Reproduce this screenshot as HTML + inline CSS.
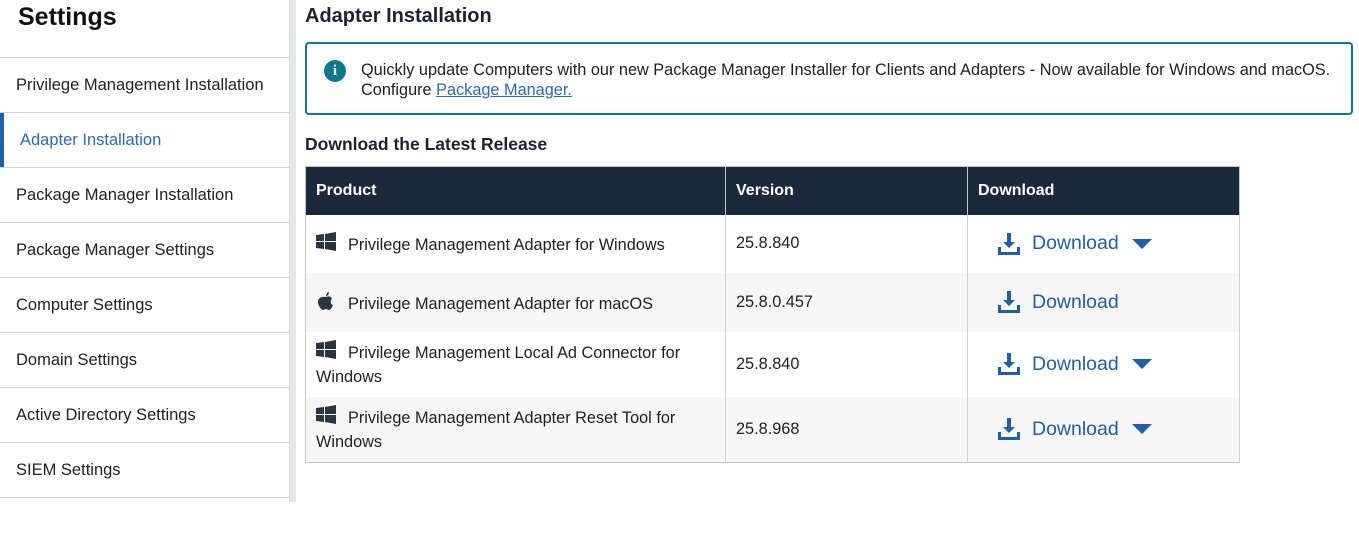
<!DOCTYPE html>
<html><head><meta charset="utf-8"><style>
*{box-sizing:border-box;margin:0;padding:0}
body{width:1359px;height:502px;overflow:hidden;background:#fff;font-family:"Liberation Sans",sans-serif;color:#1f1f1f;position:relative}
.side{position:absolute;left:0;top:0;width:289px;height:502px;background:#fff}
.sep{position:absolute;left:289px;top:0;width:7px;height:502px;background:#e6e7ea;border-left:1px solid #d4d6da}
.side h1{position:absolute;left:18px;top:3px;font-size:25px;font-weight:bold;color:#111}
.item{position:absolute;left:0;width:289px;height:55px;border-top:1px solid #d6d6d6;font-size:16.5px;padding-left:16px;line-height:55px;color:#222}
.item.act{color:#2a6bb0;padding-left:20px}
.item.act:before{content:"";position:absolute;left:0;top:0;width:4px;height:55px;background:#1e5fa6}
h2{position:absolute;left:305px;top:5px;font-size:20px;font-weight:bold;color:#1b2430}
.info{position:absolute;left:305px;top:42px;width:1048px;height:73px;border:2px solid #0a7a8f;border-radius:4px}
.info .ic{position:absolute;left:17px;top:16px;width:22px;height:22px;border-radius:50%;background:#0a7a8f;color:#fff;font-weight:bold;font-size:15px;text-align:center;line-height:22px;font-family:"Liberation Serif",serif}
.info p{position:absolute;left:54px;top:16px;font-size:16.3px;line-height:20px;color:#1f1f1f;white-space:nowrap}
.info a{color:#2a6bb0;text-decoration:underline}
h3{position:absolute;left:305px;top:134px;font-size:17.5px;font-weight:bold;color:#1b2430}
table{position:absolute;left:305px;top:166px;width:935px;border-collapse:collapse;border:1px solid #c4c4c4;font-size:16.3px}
th{background:#1b2a3b;color:#fff;text-align:left;height:48px;padding-left:10px;font-size:16px;border-right:1px solid #c4c4c4}
td{border-right:1px solid #d0d0d0;padding-left:10px;vertical-align:middle}
tr.a td{background:#fff}tr.b td{background:#f7f7f7}
.dl{color:#1e5fa6;font-size:19.5px;padding-left:20px;display:flex;align-items:center}
.dl svg{margin-right:12px}
.tri{width:0;height:0;border-left:10px solid transparent;border-right:10px solid transparent;border-top:10px solid #1e5fa6;margin-left:13px}
.ico{display:inline-block;vertical-align:-2px;margin-right:12px}
</style></head><body>
<div class="side">
<h1>Settings</h1>
<div class="item" style="top:57px">Privilege Management Installation</div>
<div class="item act" style="top:112px">Adapter Installation</div>
<div class="item" style="top:167px">Package Manager Installation</div>
<div class="item" style="top:222px">Package Manager Settings</div>
<div class="item" style="top:277px">Computer Settings</div>
<div class="item" style="top:332px">Domain Settings</div>
<div class="item" style="top:387px">Active Directory Settings</div>
<div class="item" style="top:442px">SIEM Settings</div>
<div class="item" style="top:497px"></div>
</div>
<div class="sep"></div>
<h2>Adapter Installation</h2>
<div class="info"><div class="ic">i</div><p>Quickly update Computers with our new Package Manager Installer for Clients and Adapters - Now available for Windows and macOS.<br>Configure <a>Package Manager.</a></p></div>
<h3>Download the Latest Release</h3>
<table>
<tr><th style="width:420px">Product</th><th style="width:242px">Version</th><th>Download</th></tr>
<tr class="a" style="height:58px"><td><svg class="ico" width="20" height="20" viewBox="0 0 20 20"><path fill="#2b3440" d="M0 3l8-1v7H0zM9 2l11-2v9H9zM0 10h8v7l-8-1zM9 10h11v9l-11-2z"/></svg>Privilege Management Adapter for Windows</td><td>25.8.840</td><td><div class="dl"><svg width="22" height="22" viewBox="0 0 22 22"><path fill="#1e5fa6" d="M9 0h4v9h4l-6 6-6-6h4zM0 14h3v5h16v-5h3v8H0z"/></svg>Download<span class="tri"></span></div></td></tr>
<tr class="b" style="height:59px"><td><svg class="ico" width="20" height="20" viewBox="0 0 20 20"><path fill="#2b3440" d="M10 6c2-1 5-1 6 2-2 1-2 5 1 6-1 3-3 5-4 5s-2-1-3-1-2 1-3 1c-2 0-5-5-5-8 0-4 4-6 8-5zM10 5c0-2 2-4 3-4 0 2-1 4-3 4z"/></svg>Privilege Management Adapter for macOS</td><td>25.8.0.457</td><td><div class="dl"><svg width="22" height="22" viewBox="0 0 22 22"><path fill="#1e5fa6" d="M9 0h4v9h4l-6 6-6-6h4zM0 14h3v5h16v-5h3v8H0z"/></svg>Download</div></td></tr>
<tr class="a" style="height:65px"><td style="line-height:24px"><svg class="ico" width="20" height="20" viewBox="0 0 20 20"><path fill="#2b3440" d="M0 3l8-1v7H0zM9 2l11-2v9H9zM0 10h8v7l-8-1zM9 10h11v9l-11-2z"/></svg>Privilege Management Local Ad Connector for<br>Windows</td><td>25.8.840</td><td><div class="dl"><svg width="22" height="22" viewBox="0 0 22 22"><path fill="#1e5fa6" d="M9 0h4v9h4l-6 6-6-6h4zM0 14h3v5h16v-5h3v8H0z"/></svg>Download<span class="tri"></span></div></td></tr>
<tr class="b" style="height:66px"><td style="line-height:24px"><svg class="ico" width="20" height="20" viewBox="0 0 20 20"><path fill="#2b3440" d="M0 3l8-1v7H0zM9 2l11-2v9H9zM0 10h8v7l-8-1zM9 10h11v9l-11-2z"/></svg>Privilege Management Adapter Reset Tool for<br>Windows</td><td>25.8.968</td><td><div class="dl"><svg width="22" height="22" viewBox="0 0 22 22"><path fill="#1e5fa6" d="M9 0h4v9h4l-6 6-6-6h4zM0 14h3v5h16v-5h3v8H0z"/></svg>Download<span class="tri"></span></div></td></tr>
</table>
</body></html>
